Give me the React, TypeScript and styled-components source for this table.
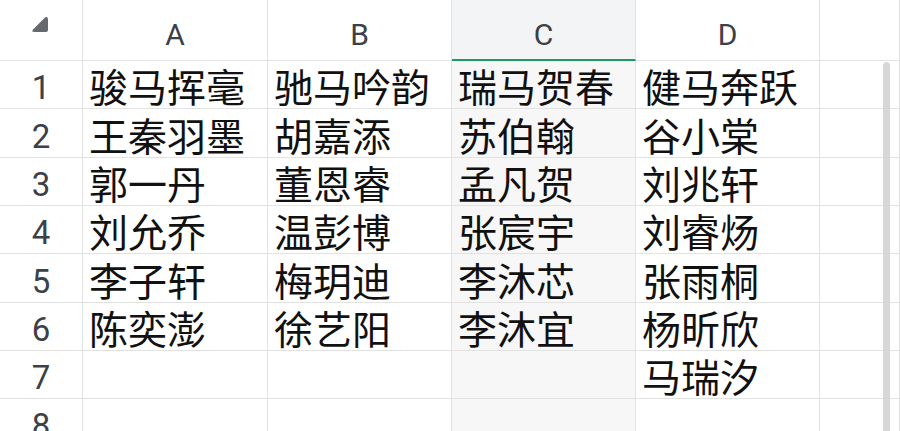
import styled, { createGlobalStyle } from "styled-components";

const GlobalStyle = createGlobalStyle`
  html, body {
    margin: 0;
    padding: 0;
    background: #ffffff;
    overflow: hidden;
  }
`

const Sheet = styled.div`
  position: relative;
  width: 900px;
  height: 431px;
  overflow: hidden;
  display: grid;
  grid-template-columns: 83px 185px 184px 184px 184px 1fr;
  grid-template-rows: 61px 48px 49px 48px 48px 49px 48px 48px 48px;
  background: #ffffff;
`

const Cell = styled.div<{ $selected?: boolean }>`
  box-sizing: border-box;
  border-right: 1px solid #e2e2e2;
  border-bottom: 1px solid #e2e2e2;
  background: ${props => props.$selected ? '#f7f7f8' : '#ffffff'};
  display: flex;
  align-items: center;
  padding: 2px 0 0 6px;
  font-family: "Noto Sans CJK SC", "Noto Sans", sans-serif;
  font-size: 39px;
  line-height: 1;
  color: #111111;
  white-space: nowrap;
`

const ColHeader = styled.div<{ $selected?: boolean }>`
  box-sizing: border-box;
  border-right: 1px solid #e2e2e2;
  border-bottom: ${props => props.$selected ? '2px solid #1b9c5f' : '1px solid #e2e2e2'};
  background: ${props => props.$selected ? '#f3f4f6' : '#ffffff'};
  display: flex;
  align-items: center;
  justify-content: center;
  padding-top: 10px;
  font-family: Roboto, "Liberation Sans", sans-serif;
  font-size: 30px;
  line-height: 1;
  color: #3c4048;
`

const RowHeader = styled.div`
  box-sizing: border-box;
  border-right: 1px solid #e2e2e2;
  border-bottom: 1px solid #e2e2e2;
  display: flex;
  align-items: center;
  justify-content: center;
  padding-top: 6px;
  font-family: Roboto, "Liberation Sans", sans-serif;
  font-size: 33px;
  line-height: 1;
  color: #3c4048;
`

const Corner = styled.div`
  box-sizing: border-box;
  border-right: 1px solid #e2e2e2;
  border-bottom: 1px solid #e2e2e2;
  display: flex;
  align-items: flex-start;
  justify-content: flex-start;
  padding: 16px 0 0 31px;
`

const Scrollbar = styled.div`
  position: absolute;
  left: 883px;
  top: 62px;
  width: 7px;
  height: 380px;
  border-radius: 4px 4px 0 0;
  background: #d7d7d7;
`

const columns = ['A', 'B', 'C', 'D', '']

const data: string[][] = [
  ['骏马挥毫', '驰马吟韵', '瑞马贺春', '健马奔跃'],
  ['王秦羽墨', '胡嘉添', '苏伯翰', '谷小棠'],
  ['郭一丹', '董恩睿', '孟凡贺', '刘兆轩'],
  ['刘允乔', '温彭博', '张宸宇', '刘睿炀'],
  ['李子轩', '梅玥迪', '李沐芯', '张雨桐'],
  ['陈奕澎', '徐艺阳', '李沐宜', '杨昕欣'],
  ['', '', '', '马瑞汐'],
  ['', '', '', ''],
]

const SELECTED = 2

export default function App() {
  return (
    <>
      <GlobalStyle />
      <Sheet>
        <Corner>
          <svg width="18" height="17" viewBox="0 0 18 17">
            <path d="M14 1.5 Q17 0 17 3.5 L17 14 Q17 16 15 16 L3.5 16 Q0 16 2 13.5 Z" fill="#666a70" />
          </svg>
        </Corner>
        {columns.map((c, i) => (
          <ColHeader key={'h' + i} $selected={i === SELECTED}>{c}</ColHeader>
        ))}
        {data.map((row, r) => (
          <>
            <RowHeader key={'r' + r}>{r + 1}</RowHeader>
            {row.map((v, c) => (
              <Cell key={r + '-' + c} $selected={c === SELECTED}>{v}</Cell>
            ))}
            <Cell key={r + '-e'} />
          </>
        ))}
        <Scrollbar />
      </Sheet>
    </>
  );
}
